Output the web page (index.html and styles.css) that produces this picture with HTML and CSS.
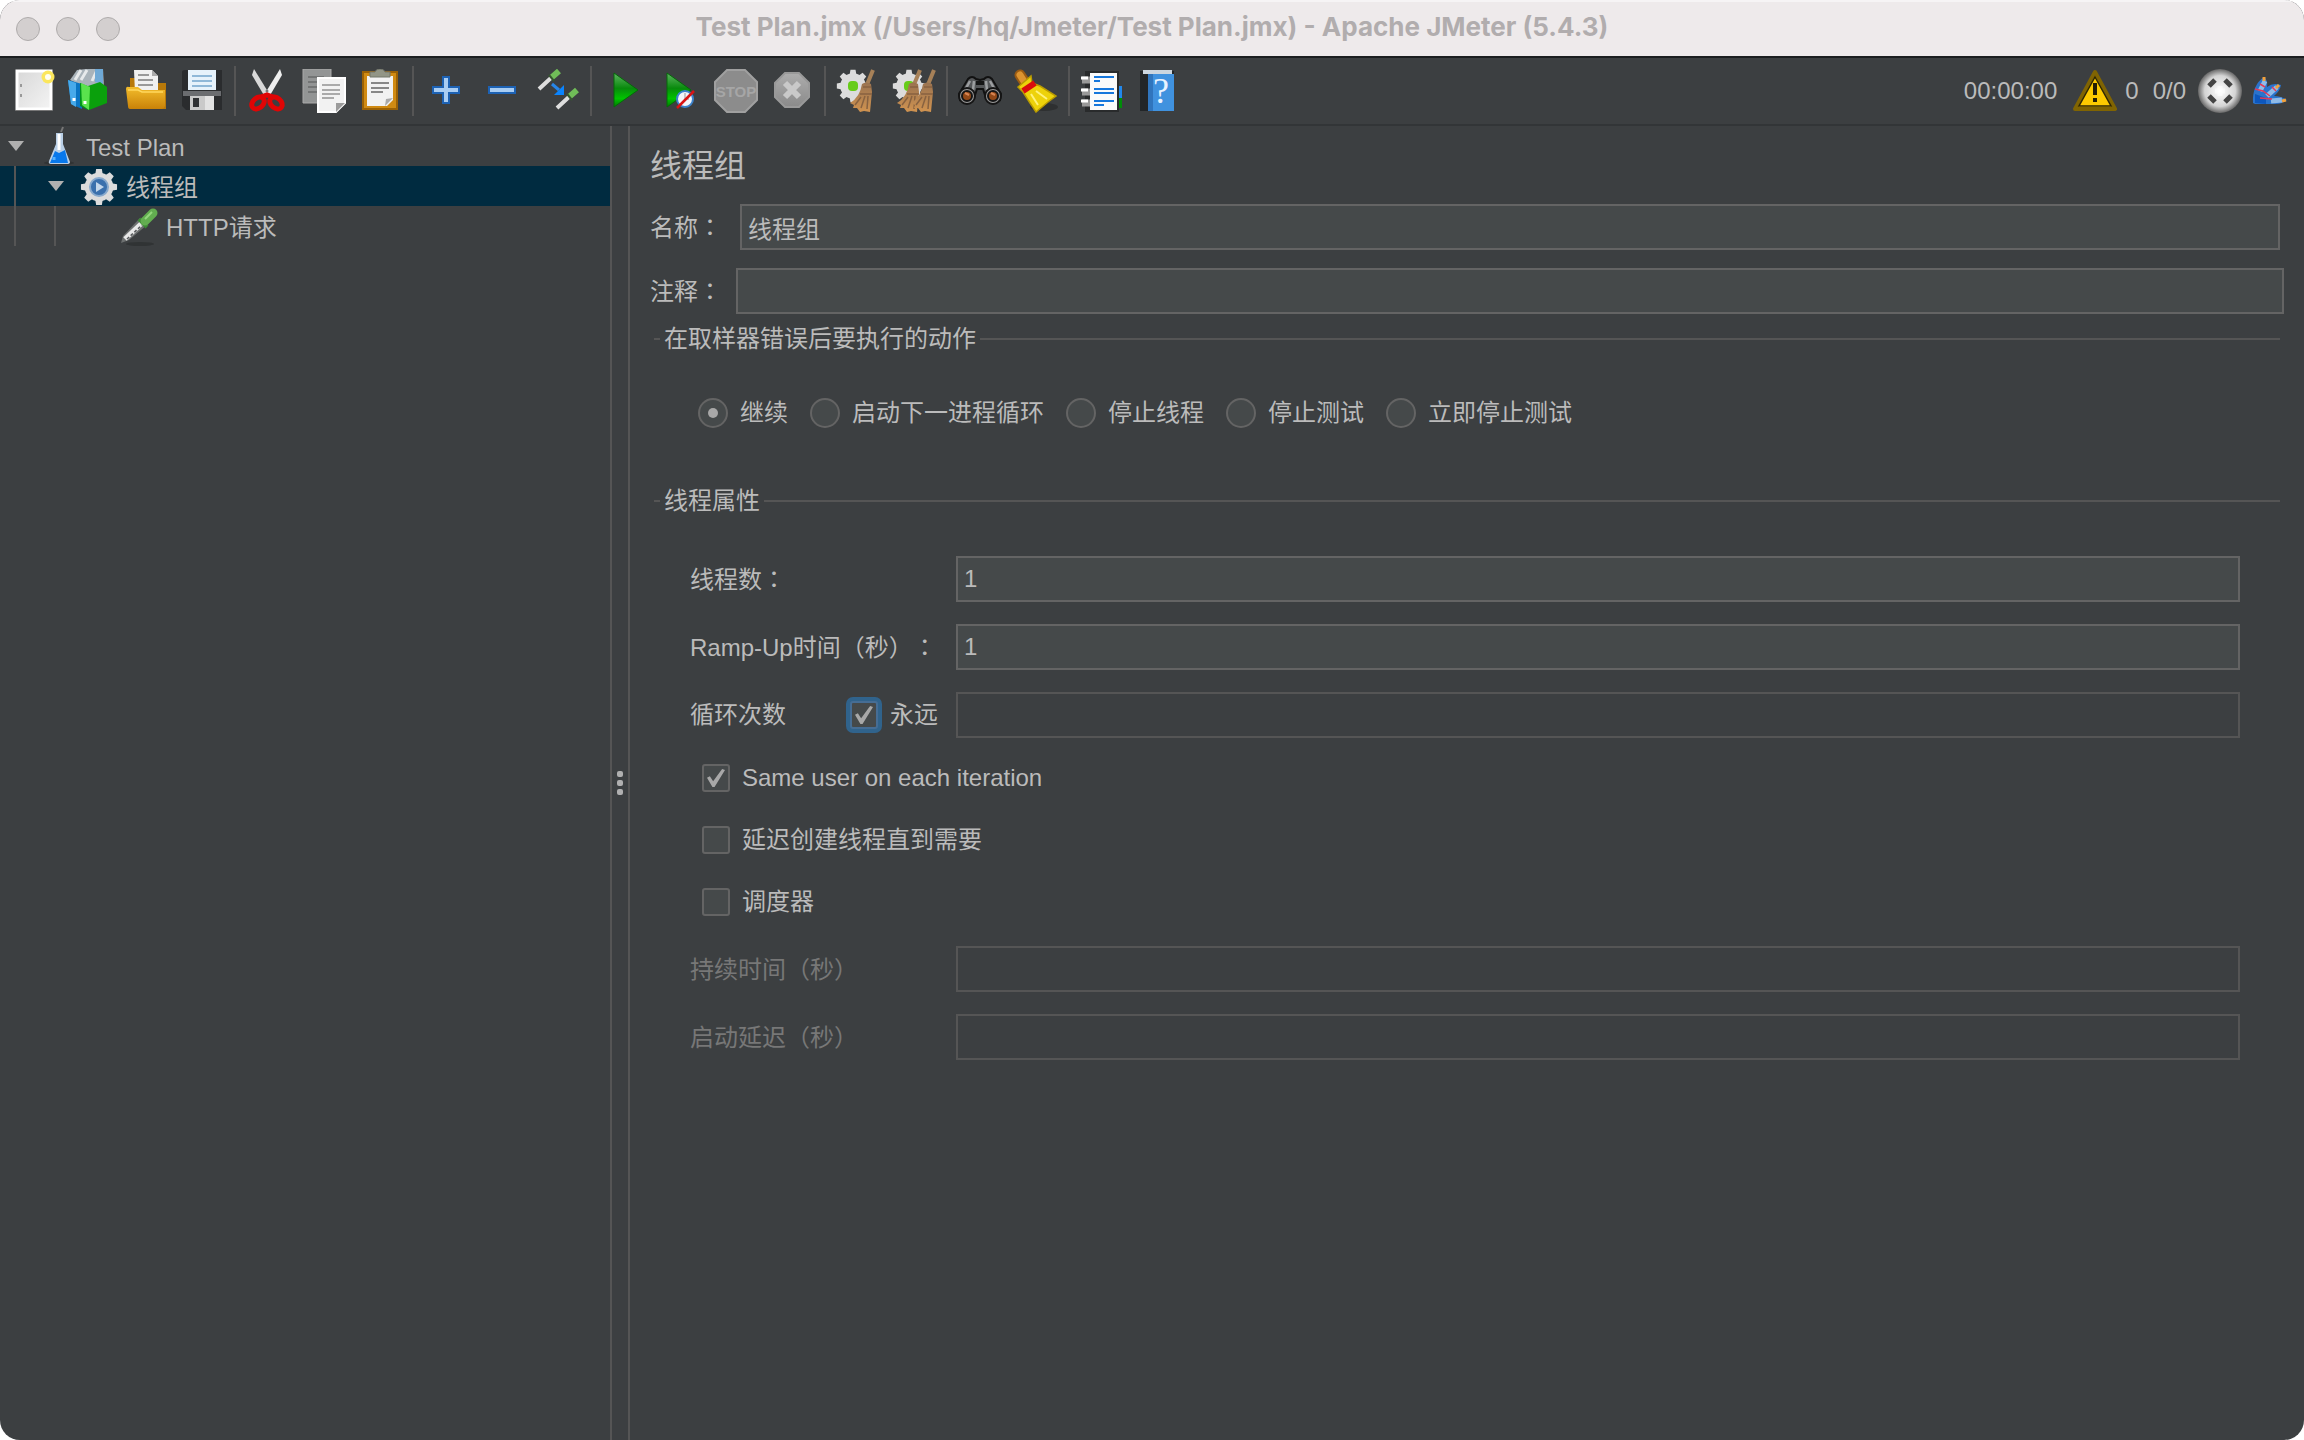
FILE: index.html
```html
<!DOCTYPE html>
<html lang="zh-CN">
  <head>
    <meta charset="UTF-8" />
    <meta name="viewport" content="width=device-width, initial-scale=1.0" />
    <title>Test Plan.jmx - Apache JMeter (5.4.3)</title>
    <link rel="stylesheet" href="styles.css">
  </head>
  <body>
    <!-- shared gradients and symbols -->
    <svg class="defs" aria-hidden="true">
      <defs>
        <linearGradient id="paper" x1="0" y1="0" x2="1" y2="1">
          <stop offset="0" stop-color="#d8d8d8" /><stop offset="1" stop-color="#f4f4f4" />
        </linearGradient>
        <linearGradient id="folder" x1="0" y1="0" x2="0" y2="1">
          <stop offset="0" stop-color="#f3bd2c" /><stop offset="1" stop-color="#c98208" />
        </linearGradient>
        <linearGradient id="green" x1="0" y1="0" x2="0" y2="1">
          <stop offset="0" stop-color="#5fb562" /><stop offset="0.45" stop-color="#088a0c" />
          <stop offset="0.75" stop-color="#00c400" /><stop offset="1" stop-color="#027a02" />
        </linearGradient>
        <linearGradient id="straw" x1="0" y1="0" x2="0" y2="1">
          <stop offset="0" stop-color="#9a7350" /><stop offset="1" stop-color="#d09350" />
        </linearGradient>
        <linearGradient id="grey" x1="0" y1="0" x2="0" y2="1">
          <stop offset="0" stop-color="#adadad" /><stop offset="1" stop-color="#8a8a8a" />
        </linearGradient>
        <radialGradient id="ball">
          <stop offset="0" stop-color="#ffffff" /><stop offset="0.7" stop-color="#d4d4d4" />
          <stop offset="1" stop-color="#666666" />
        </radialGradient>
        <symbol id="cog" viewBox="-20 -20 40 40">
          <g fill="#dcdcdc">
            <circle r="15" />
            <path id="tooth" d="M-4-13-3-19H3L4-13V13L3 19H-3L-4 13Z" />
            <use href="#tooth" transform="rotate(45)" />
            <use href="#tooth" transform="rotate(90)" />
            <use href="#tooth" transform="rotate(135)" />
          </g>
        </symbol>
        <symbol id="broom" viewBox="0 0 26 44">
          <path d="M24 1 17 18" stroke="#a78158" stroke-width="4" />
          <path d="M13 15Q17 12 22 15L23 23 21 43 15 42 11 43 8 39 4 39 5 36 1 34Q11 28 13 15Z" fill="url(#straw)" />
          <path d="M11 25H23M14 18H22M12 28 6 36M16 27 12 39M19 27 18 40" stroke="#886240" stroke-width="1.5" fill="none" />
        </symbol>
        <symbol id="pipette" viewBox="0 0 40 40">
          <path d="M1 37 3 30 20 12 27 19 9 34Z" fill="#6d7070" />
          <path d="M5 33 23 16" stroke="#e8e8e8" stroke-width="5" />
          <path d="M7 33 22 19" stroke="#55585a" stroke-width="1.500" stroke-dasharray="3 2" />
          <path d="M19 13 27 21" stroke="#3c8a35" stroke-width="4" />
          <path d="M25 15 33 7" stroke="#62ad50" stroke-width="9" stroke-linecap="round" />
          <path d="M25 13 32 6" stroke="#93d67d" stroke-width="2" />
        </symbol>
      </defs>
    </svg>

    <div class="window">
      <header class="titlebar">
        <div class="lights"><i></i><i></i><i></i></div>
        <h1>Test Plan.jmx (/Users/hq/Jmeter/Test Plan.jmx) - Apache JMeter (5.4.3)</h1>
      </header>

      <div class="toolbar">
        <button class="tool" aria-label="New">
          <svg viewBox="0 0 44 44"><path d="M5 2H39V40H5Z" fill="url(#paper)" stroke="#fff" stroke-width="3" /><path d="M4 41.500H40" stroke="#777" /><path d="M9 15V18M9 25V28" stroke="#999" stroke-width="2" /><circle cx="36" cy="8" r="6.500" fill="#fbe65c" /><circle cx="36" cy="8" r="3" fill="#fffef0" /></svg>
        </button>
        <button class="tool" aria-label="Templates">
          <svg viewBox="0 0 44 44"><path d="M2 11 9 1 18 0 35 0 36 18 20 20Z" fill="#a9b3ba" /><path d="M7 11 13 1M13 11 19 1M24 12 29 1" stroke="#e6e9eb" stroke-width="3" /><path d="M27 13V0H35V15" fill="#6fa9d6" /><path d="M0 11 14 15V40L3 35Z" fill="#0a75c4" /><path d="M0 11 8 14V38L3 35Z" fill="#47aaeb" /><path d="M12 14 22 18 20 41 12 37Z" fill="#00941b" /><path d="M20 17 32 13 39 18V34L21 41Z" fill="#0aa00c" /><path d="M13 14 22 18 21 41 14 36Z" fill="#5ae34d" /><path d="M6 29V32M17 32V35" stroke="#fff" stroke-width="3" /></svg>
        </button>
        <button class="tool" aria-label="Open">
          <svg viewBox="0 0 44 44"><path d="M6 40V9H14V14H42V40Z" fill="#b8790a" /><path d="M10 1H28L34 7V24H11Z" fill="#f0f0f0" /><path d="M28 1V7H34" fill="#aaa" /><path d="M14 6H25M14 11H29M14 16H29" stroke="#999" stroke-width="2" /><path d="M2 20Q2 17 5 18H14L18 21H41V37Q40 40 37 40H6Q4 40 4 37Z" fill="url(#folder)" /><path d="M4 21H14L18 23H39" fill="none" stroke="#ffd85e" stroke-width="1.500" /></svg>
        </button>
        <button class="tool" aria-label="Save">
          <svg viewBox="0 0 44 44"><path d="M2 3Q2 1 5 1H42V41H6L2 37Z" fill="#2a2c2e" /><path d="M3 22H41V27H3Z" fill="#6b6d70" /><path d="M8 1H36V21H8Z" fill="#e6f2fb" /><path d="M12 7H32M12 12H32M12 17H32" stroke="#8fb8d8" stroke-width="2" /><path d="M10 27H34V41H10Z" fill="#c9c9c9" /><path d="M13 29H19V38H13Z" fill="#2f3133" /><path d="M25 27H34V41H25Z" fill="#e2e2e2" /></svg>
        </button>
        <span class="sep"></span>
        <button class="tool" aria-label="Cut">
          <svg viewBox="0 0 44 44"><path d="M8 0 24 26 19 28 6 6Z" fill="#d9d9d9" /><path d="M34 0 18 26 23 28 36 6Z" fill="#efefef" /><circle cx="21" cy="22" r="1.500" fill="#777" /><g fill="none" stroke="#e00505" stroke-width="5"><ellipse cx="12" cy="34" rx="7" ry="5" transform="rotate(-40 12 34)" /><ellipse cx="30" cy="34" rx="7" ry="5" transform="rotate(40 30 34)" /><path d="M15 28 21 26 27 28" /></g></svg>
        </button>
        <button class="tool" aria-label="Copy">
          <svg viewBox="0 0 44 44"><path d="M1 0H29V34H1Z" fill="#939595" stroke="#aaaaaa" /><path d="M6 8H22M6 13H16M6 18H16M6 23H16" stroke="#737575" stroke-width="2" /><path d="M16 9H43V34L34 43H16Z" fill="#f2f2f2" stroke="#fff" stroke-width="2" /><path d="M43 34H34V43Z" fill="#9b9b9b" /><path d="M20 16H38M20 21H38M20 25H38M20 29H32" stroke="#aaa" stroke-width="2" /></svg>
        </button>
        <button class="tool" aria-label="Paste">
          <svg viewBox="0 0 44 44"><path d="M5 3H39V40H5Z" fill="#d08a12" stroke="#9b6105" stroke-width="2" /><path d="M9 7H35V31L29 37H9Z" fill="#f2f2f2" /><path d="M35 29 28 30 27 37Z" fill="#aaa" /><path d="M13 14H31M13 19H31M13 23H25" stroke="#888" stroke-width="2" /><path d="M12 8V3H17Q18 0 22 0T27 3H32V8Z" fill="#929586" stroke="#73766b" /></svg>
        </button>
        <span class="sep"></span>
        <button class="tool" aria-label="Expand all">
          <svg viewBox="0 0 44 44"><path d="M19 8H25V18H35V24H25V34H19V24H9V18H19Z" fill="#a9cdf3" stroke="#1d62b4" stroke-width="2" /></svg>
        </button>
        <button class="tool" aria-label="Collapse all">
          <svg viewBox="0 0 44 44"><path d="M9 18H35V24H9Z" fill="#a9cdf3" stroke="#1d62b4" stroke-width="2" /></svg>
        </button>
        <button class="tool" aria-label="Toggle">
          <svg viewBox="0 0 44 44"><g stroke-width="4"><path d="M3 20 16 8M21 39 34 27" stroke="#dedede" /><path d="M15 9 23 2M33 28 41 21" stroke="#70bd58" stroke-width="6" /><path d="M13 6 18 12M31 25 36 31" stroke="#35572f" stroke-width="2" /></g><path d="M16 15 23 21" stroke="#2786e8" stroke-width="3" /><path d="M28 16V26H18Z" fill="#0a84ff" /></svg>
        </button>
        <span class="sep"></span>
        <button class="tool" aria-label="Start">
          <svg viewBox="0 0 44 44"><path d="M12 4 36 21 12 38Z" fill="url(#green)" stroke="#046b08" /></svg>
        </button>
        <button class="tool" aria-label="Start no pauses">
          <svg viewBox="0 0 44 44"><path d="M9 4 33 21 9 38Z" fill="url(#green)" stroke="#046b08" /><circle cx="27" cy="30" r="8" fill="#f3f6fa" stroke="#3b82cc" stroke-width="2" /><path d="M27 24V30H31" stroke="#999" fill="none" /><path d="M19 39 36 22" stroke="#d81414" stroke-width="2.500" /></svg>
        </button>
        <button class="tool" aria-label="Stop" disabled>
          <svg viewBox="0 0 44 44"><path d="M13 1H31L43 13V31L31 43H13L1 31V13Z" fill="#8c8c8c" stroke="#a0a0a0" stroke-width="2" /><text x="22" y="28" class="stop-text">STOP</text></svg>
        </button>
        <button class="tool" aria-label="Shutdown" disabled>
          <svg viewBox="0 0 44 44"><path d="M15 4H29L39 14V28L29 38H15L5 28V14Z" fill="url(#grey)" stroke="#999" stroke-width="2" /><path d="M15 14 29 28M29 14 15 28" stroke="#c9c9c9" stroke-width="6" /></svg>
        </button>
        <span class="sep"></span>
        <button class="tool" aria-label="Clear">
          <svg viewBox="0 0 44 44"><use href="#cog" x="0" y="0" width="34" height="34" /><rect x="12" y="12" width="10" height="10" rx="4" fill="#67cc18" /><use href="#broom" x="13" y="0" width="26" height="44" /></svg>
        </button>
        <button class="tool" aria-label="Clear all">
          <svg viewBox="0 0 44 44"><use href="#cog" x="0" y="0" width="34" height="34" /><rect x="12" y="12" width="10" height="10" rx="4" fill="#67cc18" /><use href="#broom" x="4" y="0" width="26" height="44" /><use href="#broom" x="18" y="0" width="26" height="44" /></svg>
        </button>
        <span class="sep"></span>
        <button class="tool" aria-label="Search">
          <svg viewBox="0 0 44 44"><path d="M1 25 10 10Q14 6 18 10L22 11 26 10Q30 6 34 10L43 25 42 31 28 29 25 20H19L16 29 2 31Z" fill="#555759" stroke="#111" stroke-width="2" /><path d="M12 12 6 23M32 12 38 23M16 12 15 21M28 12 29 21" stroke="#9c9ea0" stroke-width="2.500" /><path d="M18 14H26" stroke="#151515" stroke-width="4" /><g stroke="#151515" stroke-width="2"><circle cx="9" cy="27" r="8" fill="#999" /><circle cx="35" cy="27" r="8" fill="#999" /><circle cx="9" cy="27" r="5" fill="#914817" /><circle cx="35" cy="27" r="5" fill="#914817" /></g><path d="M7 24 11 26M33 24 37 26" stroke="#d88452" stroke-width="2" /></svg>
        </button>
        <button class="tool" aria-label="Reset search">
          <svg viewBox="0 0 44 44"><ellipse cx="30" cy="38" rx="14" ry="4" fill="#2e3031" /><path d="M6 6 12 15" stroke="#9b5b12" stroke-width="11" stroke-linecap="round" /><path d="M6 6 11 14" stroke="#dd9430" stroke-width="7" stroke-linecap="round" /><path d="M4 18 17 7 18 14 26 17 42 27 34 33 22 43 16 34 9 23Z" fill="#edd20a" stroke="#b99b00" stroke-width="1.500" /><path d="M17 25 24 36M22 22 33 30" stroke="#fff27a" stroke-width="2" /><path d="M9 22 21 14" stroke="#d90d0d" stroke-width="6" /></svg>
        </button>
        <span class="sep"></span>
        <button class="tool" aria-label="Function helper">
          <svg viewBox="0 0 44 44"><path d="M36 17H42V29H36Z" fill="#2288ec" /><path d="M36 29H42V39H36Z" fill="#008d08" /><path d="M6 3H38V42H6Z" fill="#fafafa" stroke="#292b2c" stroke-width="2" /><path d="M6 3H10V42H6Z" fill="#292b2c" /><path d="M2 11H10M2 23H10M2 34H10" stroke="#999" stroke-width="7" /><path d="M1 9H8M1 21H8M1 32H8" stroke="#fff" stroke-width="3" /><path d="M14 8H34M14 12H20M14 20H34M14 24H34M14 32H34M14 36H24" stroke="#1677dc" stroke-width="2" /></svg>
        </button>
        <button class="tool" aria-label="Help">
          <svg viewBox="0 0 44 44"><path d="M4 2H38V42H4Z" fill="#222527" /><path d="M7 1H36V5H7Z" fill="#ccd6df" /><path d="M12 5H38V42H12Z" fill="#4092df" /><path d="M12 5H17V42H12Z" fill="#3075bd" /><text x="25" y="34" class="help-text">?</text></svg>
        </button>

        <div class="status">
          <span class="timer">00:00:00</span>
          <button class="errors">
            <svg viewBox="0 0 44 44"><path d="M22 3 42 40H2Z" fill="#fdca00" stroke="#806402" stroke-width="4" stroke-linejoin="round" /><path d="M22 8 38 37H6Z" fill="none" stroke="#2e2604" stroke-width="1.500" /><path d="M22 14V26M22 29V33" stroke="#241e05" stroke-width="4" /></svg>
            <span>0</span>
          </button>
          <span class="threads">0/0</span>
          <svg class="ball" viewBox="0 0 44 44"><circle cx="22" cy="22" r="22" fill="url(#ball)" /><path d="M11 17 17 11M27 11 33 17M33 27 27 33M17 33 11 27" stroke="#454545" stroke-width="5" /><path d="M17 22H27M22 17V27" stroke="#fff" stroke-width="5" opacity="0.5" /></svg>
          <svg class="bird" viewBox="0 0 36 30"><path d="M1 27Q0 9 12 1 16 4 15 11 21 6 29 9 28 15 22 20 29 20 35 24 30 28 24 28H3Z" fill="#2a73cc" /><path d="M8 15 13 5M15 20 25 11M19 25 30 24" stroke="#8fbbe8" stroke-width="5" /><path d="M3 27 3 18 14 22 14 28Z" fill="#0d57bd" /><path d="M3 13 11 15 18 20M8 22 20 23M8 8 13 11M20 11 24 15" stroke="#e33a59" stroke-width="1.500" fill="none" /><path d="M12 1V5M27 9 24 12M34 24 30 25" stroke="#f3a13a" stroke-width="3" /></svg>
        </div>
      </div>

      <main class="workspace">
        <nav class="tree" aria-label="Test plan tree">
          <ul>
            <li>
              <div class="node">
                <button class="twisty" aria-label="Collapse Test Plan"></button>
                <svg class="node-icon" viewBox="0 0 40 40"><ellipse cx="19" cy="37" rx="15" ry="2" fill="#303334" /><path d="M21 6 23 1" stroke="#777" stroke-width="2" /><path d="M16 7H23V18L30 36Q30 38 27 38H11Q8 38 9 35L16 18Z" fill="#b9cfe6" /><path d="M15 25 19 27 25 24 28 37H10Z" fill="#0878eb" /><path d="M19 8V24" stroke="#fff" stroke-width="3" /><path d="M14 31V34" stroke="#57b1ff" stroke-width="3" /></svg>
                <span>Test Plan</span>
              </div>
              <ul>
                <li>
                  <div class="node selected">
                    <button class="twisty" aria-label="Collapse 线程组"></button>
                    <svg class="node-icon" viewBox="0 0 40 40"><use href="#cog" x="0" y="2" width="38" height="38" /><circle cx="19" cy="21" r="9" fill="#3a70ad" stroke="#87a9cd" stroke-width="2" /><path d="M16 16 24 21 16 26Z" fill="#c3d6ea" /></svg>
                    <span>线程组</span>
                  </div>
                  <ul>
                    <li>
                      <div class="node leaf">
                        <svg class="node-icon" viewBox="0 0 40 40"><ellipse cx="20" cy="38" rx="14" ry="2" fill="#303334" /><use href="#pipette" width="40" height="40" /></svg>
                        <span>HTTP请求</span>
                      </div>
                    </li>
                  </ul>
                </li>
              </ul>
            </li>
          </ul>
        </nav>

        <div class="splitter"><i></i><i></i><i></i></div>

        <form class="panel">
          <h2>线程组</h2>
          <div class="row name-row">
            <label for="name">名称<span class="mark" lang="zh-TW">：</span></label>
            <input class="field" type="text" id="name" value="线程组">
          </div>
          <div class="row comment-row">
            <label for="comment">注释<span class="mark" lang="zh-TW">：</span></label>
            <input class="field" type="text" id="comment">
          </div>

          <fieldset>
            <legend>在取样器错误后要执行的动作</legend>
            <div class="actions">
              <label><input type="radio" name="action" checked>继续</label>
              <label><input type="radio" name="action">启动下一进程循环</label>
              <label><input type="radio" name="action">停止线程</label>
              <label><input type="radio" name="action">停止测试</label>
              <label><input type="radio" name="action">立即停止测试</label>
            </div>
          </fieldset>

          <fieldset class="properties">
            <legend>线程属性</legend>
            <div class="grid">
              <label for="threads">线程数<span class="mark" lang="zh-TW">：</span></label>
              <input class="field" type="text" id="threads" value="1">
              <label for="ramp">Ramp-Up时间<span class="mark" lang="zh-TW">（</span>秒<span class="mark" lang="zh-TW">）：</span></label>
              <input class="field" type="text" id="ramp" value="1">
              <div class="loops">
                <label for="loops">循环次数</label>
                <label class="forever"><input class="focused" type="checkbox" checked>永远</label>
              </div>
              <input class="field" type="text" id="loops" disabled>
            </div>
            <div class="checks">
              <label><input type="checkbox" checked>Same user on each iteration</label>
              <label><input type="checkbox">延迟创建线程直到需要</label>
              <label><input type="checkbox">调度器</label>
            </div>
            <div class="grid muted">
              <label for="duration">持续时间<span class="mark" lang="zh-TW">（</span>秒<span class="mark" lang="zh-TW">）</span></label>
              <input class="field" type="text" id="duration" disabled>
              <label for="delay">启动延迟<span class="mark" lang="zh-TW">（</span>秒<span class="mark" lang="zh-TW">）</span></label>
              <input class="field" type="text" id="delay" disabled>
            </div>
          </fieldset>
        </form>
      </main>
    </div>
  </body>
</html>
```
FILE: styles.css
```css
* {
  margin: 0;
  padding: 0;
  box-sizing: border-box;
}

html {
  background: #ffffff;
}

body {
  font-family: "Liberation Sans", "Noto Sans CJK SC", sans-serif;
  font-size: 24px;
  line-height: 32px;
  color: #bbbbbb;
  text-spacing-trim: space-all;
}

button,
input {
  font: inherit;
  color: inherit;
}

button {
  background: none;
  border: none;
}

ul {
  list-style: none;
}

.defs {
  position: absolute;
  width: 0;
  height: 0;
}

.window {
  display: flex;
  flex-direction: column;
  min-height: 100vh;
  background: #3c3f41;
  border-radius: 20px;
  overflow: hidden;
}

/* Title bar */
.titlebar {
  display: grid;
  grid-template-columns: 1fr auto 1fr;
  align-items: center;
  height: 58px;
  padding: 0 16px;
  background: #eeeaeb;
  border-top: 2px solid #f6f4f5;
  border-bottom: 2px solid #1c1e20;
}

.lights {
  display: flex;
  gap: 16px;
}

.lights i {
  width: 24px;
  height: 24px;
  border-radius: 50%;
  background: #d3cfcf;
  border: 1px solid #aeabab;
}

.titlebar h1 {
  font-family: Inter, "Liberation Sans", sans-serif;
  font-size: 26px;
  font-weight: 700;
  padding-bottom: 4px;
  color: #b1adae;
}

/* Toolbar */
.toolbar {
  display: flex;
  align-items: center;
  height: 68px;
  padding: 0 16px 0 6px;
  border-bottom: 2px solid #323537;
}

.tool {
  width: 56px;
  height: 56px;
  padding: 6px;
}

.tool svg {
  display: block;
  width: 44px;
  height: 44px;
}

.sep {
  width: 2px;
  height: 50px;
  margin: 0 4px;
  background: #555555;
}

.stop-text {
  font-size: 15px;
  font-weight: bold;
  text-anchor: middle;
  fill: #a6a6a6;
}

.help-text {
  font-family: "Liberation Serif", serif;
  font-size: 36px;
  text-anchor: middle;
  fill: #e8f3ff;
}

.status {
  display: flex;
  align-items: center;
  margin-left: auto;
}

.errors {
  display: flex;
  align-items: center;
  gap: 8px;
  margin: 0 14px 0 16px;
}

.errors svg,
.ball {
  width: 44px;
  height: 44px;
}

.ball {
  margin: 0 10px 0 12px;
}

.bird {
  width: 36px;
  height: 30px;
}

/* Workspace */
.workspace {
  display: flex;
  flex: 1;
}

.tree {
  width: 610px;
  flex-shrink: 0;
}

.node {
  display: flex;
  align-items: center;
  height: 40px;
  padding-left: 8px;
}

.node span {
  padding: 3px 0 0 6px;
}

.node-icon {
  width: 40px;
  height: 40px;
}

.twisty {
  width: 16px;
  height: 10px;
  margin-right: 16px;
  background: #b0b0b0;
  clip-path: polygon(0 0, 100% 0, 50% 100%);
}

.tree ul ul {
  background: linear-gradient(#555555, #555555) 14px 0 / 2px 100% no-repeat;
}

.tree ul ul ul {
  background-position: 54px 0;
}

.tree ul ul .node {
  padding-left: 48px;
}

.tree ul ul .leaf {
  padding-left: 120px;
}

.selected {
  background: linear-gradient(#555555, #555555) 14px 0 / 2px 100% no-repeat #002b40;
}

.splitter {
  display: flex;
  flex-direction: column;
  align-items: center;
  justify-content: center;
  gap: 3px;
  width: 20px;
  flex-shrink: 0;
  border-left: 2px solid #555555;
  border-right: 2px solid #555555;
}

.splitter i {
  width: 6px;
  height: 6px;
  border-radius: 2px;
  background: #b0b0b0;
}

/* Form */
.panel {
  flex: 1;
  min-width: 0;
  padding: 20px 20px 40px;
}

.panel h2 {
  font-size: 32px;
  font-weight: normal;
  line-height: 40px;
  margin-bottom: 18px;
}

.mark {
  font-family: "Noto Sans CJK TC", sans-serif;
}

.row {
  display: flex;
  align-items: center;
}

.row label {
  width: 86px;
}

.name-row {
  padding-right: 4px;
  margin-bottom: 18px;
}

.name-row label {
  width: 90px;
}

.field {
  flex: 1;
  min-width: 0;
  height: 46px;
  padding: 0 6px;
  background: #45494a;
  border: 2px solid #646464;
  outline: none;
}

.field:disabled {
  background: #3c3f41;
  border-color: #555555;
}

fieldset {
  margin: 9px 4px 0;
  padding: 0 40px 0 6px;
  border: none;
  border-top: 2px solid #555555;
}

legend {
  padding: 0 4px;
}

.actions {
  display: flex;
  flex-wrap: wrap;
  gap: 22px;
  padding: 42px 0 0 38px;
}

.actions label,
.checks label,
.forever {
  display: flex;
  align-items: center;
  gap: 12px;
}

input[type="radio"],
input[type="checkbox"] {
  appearance: none;
  display: grid;
  place-items: center;
  width: 30px;
  height: 30px;
  background: #45494a;
  border: 2px solid #646464;
  border-radius: 50%;
}

input[type="checkbox"] {
  width: 28px;
  height: 28px;
  border-radius: 3px;
}

input[type="radio"]:checked::before {
  content: "";
  width: 10px;
  height: 10px;
  border-radius: 50%;
  background: #a8a8a8;
}

input[type="checkbox"]:checked::before {
  content: "";
  width: 18px;
  height: 18px;
  background: #a8a8a8;
  clip-path: polygon(0 48%, 16% 40%, 34% 68%, 84% 0, 100% 6%, 42% 100%, 30% 100%);
}

input.focused {
  border-color: #466d94;
  box-shadow: 0 0 0 4px #30638c;
}

.properties {
  margin-top: 56px;
}

.grid {
  display: grid;
  grid-template-columns: 266px 1fr;
  align-items: center;
  row-gap: 22px;
  padding: 39px 0 0 30px;
}

.loops {
  display: flex;
  justify-content: space-between;
  padding-right: 18px;
}

.checks {
  display: flex;
  flex-direction: column;
  gap: 30px;
  padding: 24px 0 28px 42px;
}

.muted {
  padding-top: 0;
  color: #777777;
}
```
